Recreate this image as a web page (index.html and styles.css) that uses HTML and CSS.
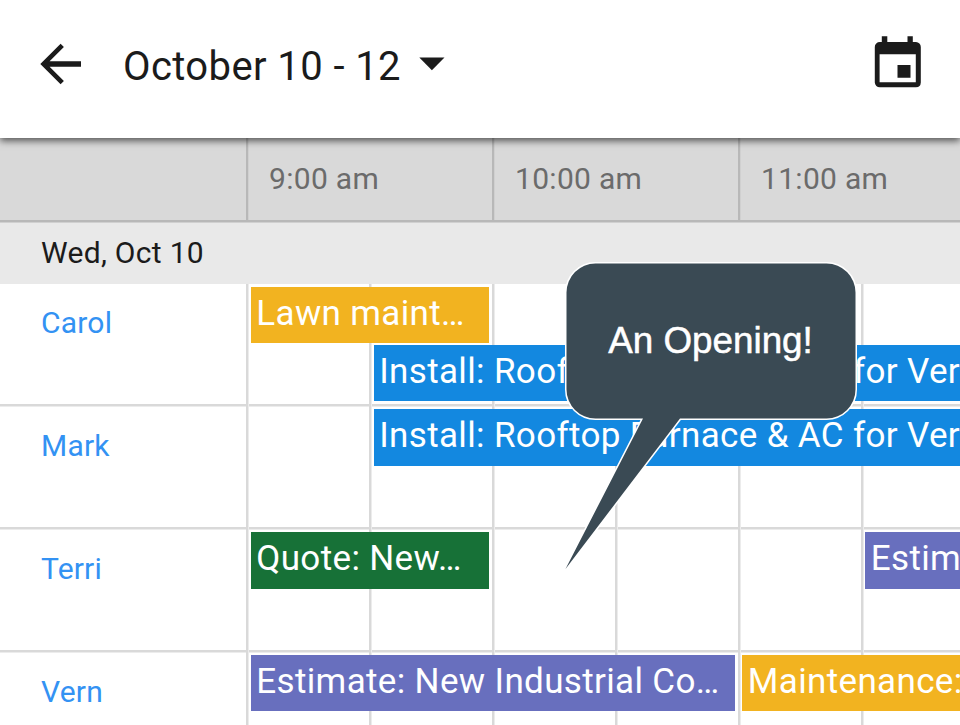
FILE: index.html
```html
<!DOCTYPE html>
<html lang="en">
<head>
    <meta charset="UTF-8">
    <meta name="viewport" content="width=device-width, initial-scale=1.0">
    <title>Schedule</title>
    <link rel="stylesheet" href="styles.css">
</head>
<body>
    <header class="app-bar">
        <svg class="back-icon" width="42" height="42" viewBox="0 0 42 42">
            <path d="M41 18.3H9.6L23.9 4 20.6 0.7 0.3 21 20.6 41.3 23.9 38 9.6 23.7H41Z" fill="#1b1b1b"/>
        </svg>
        <h1>October 10 - 12</h1>
        <svg class="caret-icon" width="26" height="14" viewBox="0 0 26 14">
            <path d="M0.3 0.5H25.5L12.9 13.2Z" fill="#1b1b1b"/>
        </svg>
        <svg class="today-icon" width="48" height="52" viewBox="0 0 48 52">
            <path fill="#1b1b1b" fill-rule="evenodd" d="M7.8 0.3H13.3V6H33.5V0.3H38.8V6H42A5 5 0 0 1 46.8 11V46.5A5 5 0 0 1 42 51.3H5.8A5 5 0 0 1 0.8 46.5V11A5 5 0 0 1 5.8 6H7.8ZM5.6 18.2V46.2H41.8V18.2ZM23.5 29H36.5V41.8H23.5Z"/>
        </svg>
    </header>

    <main class="schedule">
        <div class="time-row">
            <div class="time"></div>
            <div class="time">9:00 am</div>
            <div class="time">10:00 am</div>
            <div class="time">11:00 am</div>
        </div>
        <div class="date-row">Wed, Oct 10</div>

        <div class="row">
            <a class="name">Carol</a>
            <div class="track">
                <div class="event yellow start-900 end-1000">Lawn maint…</div>
                <div class="event blue start-930 lane-2">Install: Rooftop Furnace &amp; AC for Ver</div>
            </div>
        </div>
        <div class="row">
            <a class="name">Mark</a>
            <div class="track">
                <div class="event blue start-930">Install: Rooftop Furnace &amp; AC for Ver</div>
            </div>
        </div>
        <div class="row">
            <a class="name">Terri</a>
            <div class="track">
                <div class="event green start-900 end-1000">Quote: New…</div>
                <div class="event purple start-1130">Estim</div>
            </div>
        </div>
        <div class="row">
            <a class="name">Vern</a>
            <div class="track">
                <div class="event purple start-900 end-1100">Estimate: New Industrial Co…</div>
                <div class="event yellow start-1100">Maintenance:</div>
            </div>
        </div>
    </main>

    <div class="callout">
        <svg class="callout-shape" width="294" height="312" viewBox="0 0 294 312">
            <path d="M31.5 2.5H262.5A29 29 0 0 1 291.5 31.5V128.5A29 29 0 0 1 262.5 157.5H116L1.5 308 79 157.5H31.5A29 29 0 0 1 2.5 128.5V31.5A29 29 0 0 1 31.5 2.5Z"/>
        </svg>
        <span class="callout-text">An Opening!</span>
    </div>
</body>
</html>
```
FILE: styles.css
```css
* {
    box-sizing: border-box;
}

body {
    margin: 0;
    width: 960px;
    height: 725px;
    overflow: hidden;
    position: relative;
    font-family: Roboto, sans-serif;
    background: white;
    color: #1b1b1b;
}

.app-bar {
    position: relative;
    z-index: 1;
    display: flex;
    align-items: center;
    height: 138px;
    padding: 0 38px 10px 40px;
    background: white;
    box-shadow: 0 3px 7px rgba(0, 0, 0, 0.6);
}

.app-bar h1 {
    margin: 6px 0 0 41px;
    font-size: 40px;
    font-weight: 400;
    line-height: 48px;
    letter-spacing: 0.4px;
    white-space: nowrap;
}

.caret-icon {
    margin-left: 18px;
}

.today-icon {
    margin: -5px 0 0 auto;
}

.schedule {
    height: 587px;
    overflow: hidden;
}

.time-row {
    display: flex;
    height: 84px;
    background: linear-gradient(#b8b8b8, #b8b8b8) left bottom / 100% 2px no-repeat #d9d9d9;
}

.time {
    flex: 0 0 246px;
    height: 82px;
    padding-left: 23px;
    background: linear-gradient(to right, #b8b8b8 2px, #d0d0d0 2px 3px, transparent 3px);
    font-size: 30px;
    line-height: 82px;
    letter-spacing: 0.3px;
    color: #6b6b6b;
}

.time:first-child {
    background: none;
}

.date-row {
    height: 62px;
    padding-left: 41px;
    background: linear-gradient(#d0d0d0 1px, #e9e9e9 1px);
    font-size: 30px;
    line-height: 62px;
    letter-spacing: 0.3px;
}

.row {
    display: flex;
    height: 122.9px;
    background: linear-gradient(#d9d9d9 0 2px, #ececec 2px 3px) left bottom / 100% 3px no-repeat;
}

.name {
    flex: 0 0 246px;
    padding: 21px 0 0 41px;
    font-size: 30px;
    line-height: 36px;
    letter-spacing: 0.2px;
    color: #3392f3;
}

.track {
    flex: 1;
    display: grid;
    grid-template-columns: repeat(6, 122.9px);
    grid-template-rows: 58.6px 58.6px;
    padding-top: 2.6px;
    overflow: hidden;
    background: repeating-linear-gradient(to right, #d9d9d9 0 2px, #ececec 2px 3px, transparent 3px 123px);
}

.event {
    grid-row: 1;
    grid-column-end: 7;
    height: 56.2px;
    margin: 0 3px 0 4.8px;
    padding-left: 5.5px;
    overflow: hidden;
    white-space: nowrap;
    font-size: 35px;
    line-height: 54px;
    letter-spacing: 0.35px;
    color: white;
}

.lane-2 { grid-row: 2; }

.start-900 { grid-column-start: 1; }
.start-930 { grid-column-start: 2; }
.start-1100 { grid-column-start: 5; }
.start-1130 { grid-column-start: 6; }
.end-1000 { grid-column-end: 3; }
.end-1100 { grid-column-end: 5; }

.yellow { background: #f2b320; }
.blue { background: #1388e0; }
.green { background: #177137; }
.purple { background: #686fbe; }

.callout {
    position: absolute;
    z-index: 2;
    left: 564px;
    top: 261px;
    width: 294px;
    height: 312px;
}

.callout-shape {
    display: block;
    fill: #3a4a54;
    stroke: white;
    stroke-width: 3px;
    stroke-linejoin: bevel;
    paint-order: stroke;
}

.callout-text {
    position: absolute;
    top: 59px;
    left: 0;
    width: 293px;
    text-align: center;
    font-family: "Liberation Sans", Arial, sans-serif;
    font-size: 36.8px;
    line-height: 42px;
    color: white;
    -webkit-text-stroke: 0.5px white;
}
```
